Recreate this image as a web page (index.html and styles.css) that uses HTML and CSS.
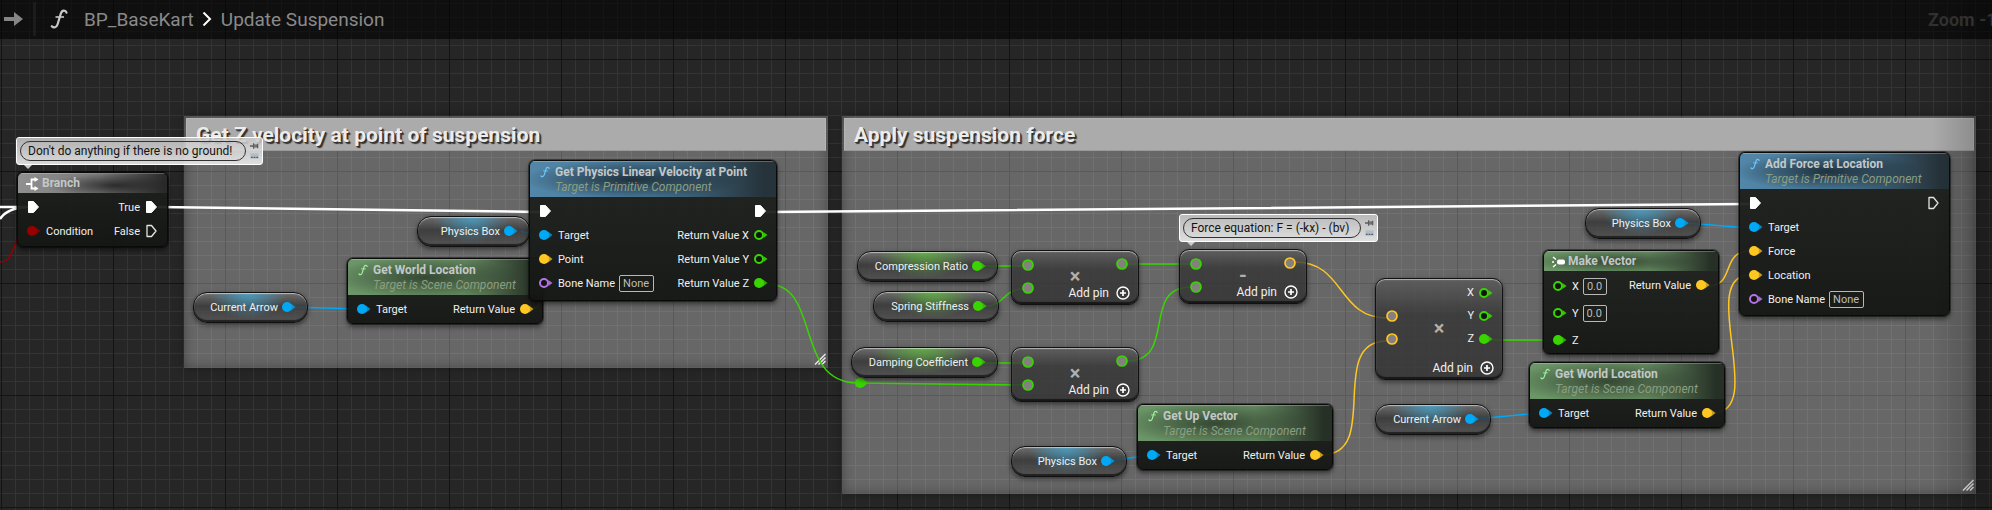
FILE: index.html
```html
<!DOCTYPE html>
<html lang="en">
<head>
<meta charset="utf-8">
<title>BP_BaseKart - Update Suspension</title>
<link rel="stylesheet" href="styles.css">
</head>
<body>
<svg class="defs" aria-hidden="true">
  <symbol id="pin" viewBox="0 0 16 16"><circle cx="6" cy="8" r="5" fill="currentColor"/><path d="M10 4.500L14.500 8L10 11.500Z" fill="currentColor" opacity=".75"/></symbol>
  <symbol id="pin-open" viewBox="0 0 16 16"><circle cx="6" cy="8" r="4" fill="#111411" stroke="currentColor" stroke-width="2"/><path d="M10.500 5L14.500 8L10.500 11Z" fill="currentColor" opacity=".9"/></symbol>
  <symbol id="ring" viewBox="0 0 12 12"><circle cx="6" cy="6" r="5" fill="#848080" stroke="currentColor" stroke-width="1.700"/></symbol>
  <symbol id="exec" viewBox="0 0 16 16"><path d="M2.500 2.500H7.500L12.500 8L7.500 13.500H2.500Z" fill="#fff" stroke="#fff" stroke-linejoin="round"/></symbol>
  <symbol id="exec-open" viewBox="0 0 16 16"><path d="M3 2.500H7.500L12 8L7.500 13.500H3Z" fill="none" stroke="#e4e4e4" stroke-width="1.300" stroke-linejoin="round"/></symbol>
  <symbol id="fn" viewBox="0 0 18 20"><path d="M16.500 3.600C15.500 .8 12 .8 10.800 4.600L7.600 15.200C6.600 18.600 3.600 19.200 1.800 17.200" fill="none" stroke="currentColor" stroke-width="2.200" stroke-linecap="round"/><path d="M5.500 8H14" stroke="currentColor" stroke-width="1.600"/></symbol>
  <symbol id="plus" viewBox="0 0 14 14"><circle cx="7" cy="7" r="6" fill="none" stroke="#fff" stroke-width="1.400"/><path d="M7 4V10M4 7H10" stroke="#fff" stroke-width="1.700"/></symbol>
  <symbol id="grip" viewBox="0 0 12 12"><path d="M1 11.500L11.500 1M4.500 11.500L11.500 4.500M8 11.500L11.500 8" stroke="#e8e8e8" stroke-width="1.500"/></symbol>
  <symbol id="tack" viewBox="0 0 10 8"><path d="M0 4H4M4 1V7M4.500 3H8V5H4.500M8.500 1.500V6.500" fill="none" stroke="#5d5d5d" stroke-width="1.400"/></symbol>
  <symbol id="note" viewBox="0 0 10 8"><rect x=".5" y="1" width="9" height="6" fill="#b4bcc4"/><path d="M1 5.500H3M4 5.500H6M7 5.500H9" stroke="#4f5d70" stroke-width="1.200"/></symbol>
  <symbol id="branch" viewBox="0 0 14 14"><path d="M0 7H5M10 2.500H5.500V11.500H10" fill="none" stroke="#fff" stroke-width="1.800"/><path d="M8.500 0L12.500 2.500L8.500 5ZM8.500 9L12.500 11.500L8.500 14Z" fill="#fff"/></symbol>
  <symbol id="make" viewBox="0 0 14 12"><path d="M1 1L4 3.500M1 11L4 8.500M0 6H2" stroke="#fff" stroke-width="1.500"/><rect x="5" y="3.500" width="8" height="5" rx="2" fill="#fff"/></symbol>
</svg>

<main class="graph">
  <section class="comment comment-velocity"><h2>Get Z velocity at point of suspension</h2><svg class="grip"><use href="#grip"/></svg></section>
  <section class="comment comment-force"><h2>Apply suspension force</h2><svg class="grip"><use href="#grip"/></svg></section>

  <svg class="wires" aria-hidden="true">
    <g class="wire-exec">
      <path d="M0 207H28M0 219Q7 208 28 207"/>
      <path d="M158 207L540 212M766 212L1750 204"/>
    </g>
    <path class="red" d="M0 262C18 262 10 231 30 231"/>
    <g class="green">
      <path d="M767 284C822 284 793 383 858 383L1023 385"/>
      <path d="M983 266H1023M985 306C1005 306 1003 289 1023 289M984 363H1023"/>
      <path d="M1127 264H1191M1127 361C1178 361 1140 287 1191 287"/>
      <path d="M1490 340H1554"/>
    </g>
    <g class="yellow">
      <path d="M1295 262C1345 262 1337 318 1387 318"/>
      <path d="M1322 455C1382 455 1326 341 1387 341"/>
      <path d="M530 309C556 309 520 260 545 260"/>
      <path d="M1708 286C1736 286 1720 251 1750 251"/>
      <path d="M1713 413C1768 413 1696 275 1750 275"/>
    </g>
    <g class="blue">
      <path d="M293 307L357 309M520 231L540 236M1686 223L1750 228M1476 419L1540 413M1112 461L1148 455"/>
    </g>
    <g class="green"><polygon points="863,379 868,383 863,387"/><circle cx="860" cy="383" r="5"/></g>
  </svg>

  <div class="bubble bubble-ground">
    <input type="text" value="Don't do anything if there is no ground!" aria-label="Branch comment">
    <div class="bubble-tools"><button aria-label="Pin comment"><svg><use href="#tack"/></svg></button><button aria-label="Toggle comment"><svg><use href="#note"/></svg></button></div>
  </div>
  <div class="bubble bubble-equation">
    <input type="text" value="Force equation: F = (-kx) - (bv)" aria-label="Subtract comment">
    <div class="bubble-tools"><button aria-label="Pin comment"><svg><use href="#tack"/></svg></button><button aria-label="Toggle comment"><svg><use href="#note"/></svg></button></div>
  </div>

  <article class="node branch">
    <header class="gray slim"><svg class="glyph"><use href="#branch"/></svg><h3>Branch</h3></header>
    <div class="body">
      <div class="col"><div class="row"><svg><use href="#exec"/></svg></div><div class="row red"><svg><use href="#pin"/></svg><span>Condition</span></div></div>
      <div class="col out"><div class="row"><span>True</span><svg><use href="#exec"/></svg></div><div class="row"><span>False</span><svg><use href="#exec-open"/></svg></div></div>
    </div>
  </article>

  <div class="var blue arrow-a"><span>Current Arrow</span><svg><use href="#pin"/></svg></div>
  <div class="var blue box-a"><span>Physics Box</span><svg><use href="#pin"/></svg></div>

  <article class="node world-a">
    <header class="lime"><svg class="glyph"><use href="#fn"/></svg><div><h3>Get World Location</h3><p>Target is Scene Component</p></div></header>
    <div class="body">
      <div class="col"><div class="row blue"><svg><use href="#pin"/></svg><span>Target</span></div></div>
      <div class="col out"><div class="row yellow"><span>Return Value</span><svg><use href="#pin"/></svg></div></div>
    </div>
  </article>

  <article class="node velocity">
    <header class="azure"><svg class="glyph"><use href="#fn"/></svg><div><h3>Get Physics Linear Velocity at Point</h3><p>Target is Primitive Component</p></div></header>
    <div class="body">
      <div class="col">
        <div class="row"><svg><use href="#exec"/></svg></div>
        <div class="row blue"><svg><use href="#pin"/></svg><span>Target</span></div>
        <div class="row yellow"><svg><use href="#pin"/></svg><span>Point</span></div>
        <div class="row purple"><svg><use href="#pin-open"/></svg><label for="bone-a">Bone Name</label><input id="bone-a" class="name" type="text" value="None"></div>
      </div>
      <div class="col out">
        <div class="row"><svg><use href="#exec"/></svg></div>
        <div class="row green"><span>Return Value X</span><svg><use href="#pin-open"/></svg></div>
        <div class="row green"><span>Return Value Y</span><svg><use href="#pin-open"/></svg></div>
        <div class="row green"><span>Return Value Z</span><svg><use href="#pin"/></svg></div>
      </div>
    </div>
  </article>

  <div class="var green ratio"><span>Compression Ratio</span><svg><use href="#pin"/></svg></div>
  <div class="var green stiffness"><span>Spring Stiffness</span><svg><use href="#pin"/></svg></div>
  <div class="var green damping"><span>Damping Coefficient</span><svg><use href="#pin"/></svg></div>

  <div class="math multiply-a">
    <div class="inputs green"><svg><use href="#ring"/></svg><svg><use href="#ring"/></svg></div>
    <span class="op">×</span>
    <div class="result green"><svg><use href="#ring"/></svg></div>
    <button class="add">Add pin<svg><use href="#plus"/></svg></button>
  </div>
  <div class="math multiply-b">
    <div class="inputs green"><svg><use href="#ring"/></svg><svg><use href="#ring"/></svg></div>
    <span class="op">×</span>
    <div class="result green"><svg><use href="#ring"/></svg></div>
    <button class="add">Add pin<svg><use href="#plus"/></svg></button>
  </div>
  <div class="math subtract">
    <div class="inputs green"><svg><use href="#ring"/></svg><svg><use href="#ring"/></svg></div>
    <span class="op">-</span>
    <div class="result yellow"><svg><use href="#ring"/></svg></div>
    <button class="add">Add pin<svg><use href="#plus"/></svg></button>
  </div>
  <div class="math multiply-c">
    <div class="inputs yellow"><svg><use href="#ring"/></svg><svg><use href="#ring"/></svg></div>
    <span class="op">×</span>
    <div class="split green">
      <div class="row"><span>X</span><svg><use href="#pin-open"/></svg></div>
      <div class="row"><span>Y</span><svg><use href="#pin-open"/></svg></div>
      <div class="row"><span>Z</span><svg><use href="#pin"/></svg></div>
    </div>
    <button class="add">Add pin<svg><use href="#plus"/></svg></button>
  </div>

  <div class="var blue box-b"><span>Physics Box</span><svg><use href="#pin"/></svg></div>
  <div class="var blue arrow-b"><span>Current Arrow</span><svg><use href="#pin"/></svg></div>
  <div class="var blue box-c"><span>Physics Box</span><svg><use href="#pin"/></svg></div>

  <article class="node up-vector">
    <header class="lime"><svg class="glyph"><use href="#fn"/></svg><div><h3>Get Up Vector</h3><p>Target is Scene Component</p></div></header>
    <div class="body">
      <div class="col"><div class="row blue"><svg><use href="#pin"/></svg><span>Target</span></div></div>
      <div class="col out"><div class="row yellow"><span>Return Value</span><svg><use href="#pin"/></svg></div></div>
    </div>
  </article>

  <article class="node make-vector">
    <header class="lime slim"><svg class="glyph"><use href="#make"/></svg><h3>Make Vector</h3></header>
    <div class="body">
      <div class="col loose">
        <div class="row green"><svg><use href="#pin-open"/></svg><label for="vec-x">X</label><input id="vec-x" class="number" type="text" value="0.0"></div>
        <div class="row green"><svg><use href="#pin-open"/></svg><label for="vec-y">Y</label><input id="vec-y" class="number" type="text" value="0.0"></div>
        <div class="row green"><svg><use href="#pin"/></svg><span>Z</span></div>
      </div>
      <div class="col out"><div class="row yellow"><span>Return Value</span><svg><use href="#pin"/></svg></div></div>
    </div>
  </article>

  <article class="node world-b">
    <header class="lime"><svg class="glyph"><use href="#fn"/></svg><div><h3>Get World Location</h3><p>Target is Scene Component</p></div></header>
    <div class="body">
      <div class="col"><div class="row blue"><svg><use href="#pin"/></svg><span>Target</span></div></div>
      <div class="col out"><div class="row yellow"><span>Return Value</span><svg><use href="#pin"/></svg></div></div>
    </div>
  </article>

  <article class="node add-force">
    <header class="azure"><svg class="glyph"><use href="#fn"/></svg><div><h3>Add Force at Location</h3><p>Target is Primitive Component</p></div></header>
    <div class="body">
      <div class="col">
        <div class="row"><svg><use href="#exec"/></svg></div>
        <div class="row blue"><svg><use href="#pin"/></svg><span>Target</span></div>
        <div class="row yellow"><svg><use href="#pin"/></svg><span>Force</span></div>
        <div class="row yellow"><svg><use href="#pin"/></svg><span>Location</span></div>
        <div class="row purple"><svg><use href="#pin-open"/></svg><label for="bone-b">Bone Name</label><input id="bone-b" class="name" type="text" value="None"></div>
      </div>
      <div class="col out"><div class="row"><svg><use href="#exec-open"/></svg></div></div>
    </div>
  </article>

  <div class="vignette"></div>

  <nav class="topbar" aria-label="Breadcrumb">
    <button class="forward" aria-label="Forward"><svg viewBox="0 0 20 14"><path d="M0 5H10V0L19 7L10 14V9H0Z" fill="#858585"/></svg></button>
    <span class="divider"></span>
    <svg class="fn"><use href="#fn"/></svg>
    <a href="#">BP_BaseKart</a>
    <svg class="chevron" viewBox="0 0 10 14"><path d="M1.500 0.500L8 7L1.500 13.500" fill="none" stroke="#fff" stroke-width="2"/></svg>
    <a href="#">Update Suspension</a>
    <span class="zoom">Zoom -1</span>
  </nav>
</main>
</body>
</html>
```
FILE: styles.css
```css
* { box-sizing: border-box; }

body {
  margin: 0;
  background: #262626;
  font-family: Roboto, "Liberation Sans", sans-serif;
  font-size: 11px;
  color: #f0f0f0;
}

h2, h3, p { margin: 0; }

button {
  padding: 0;
  border: 0;
  background: none;
  color: inherit;
  font: inherit;
}

.defs { position: absolute; width: 0; height: 0; }

.graph {
  position: relative;
  min-height: 100vh;
  overflow: hidden;
  background-color: #262626;
  background-image:
    linear-gradient(to right, #141414 1px, transparent 1px),
    linear-gradient(to bottom, #141414 1px, transparent 1px),
    linear-gradient(to right, #343434 1px, transparent 1px),
    linear-gradient(to bottom, #343434 1px, transparent 1px);
  background-size: 112px 112px, 112px 112px, 14px 14px, 14px 14px;
  background-position: 1px 0, 0 59px, 1px 0, 0 3px;
}

.blue { color: #00a8f5; }
.yellow { color: #ffc722; }
.green { color: #38d500; }
.purple { color: #b473e6; }
.red { color: #980000; }

/* Top bar */
.topbar {
  position: relative;
  display: flex;
  align-items: center;
  height: 39px;
  padding-bottom: 1px;
  background: rgba(0, 0, 0, 0.6);
  font-size: 19px;
}
.topbar a { color: #8a8a8a; text-decoration: none; }
.forward { margin-left: 4px; width: 20px; height: 14px; display: flex; }
.forward svg { width: 20px; height: 14px; }
.divider { margin-left: 9px; width: 3px; height: 34px; background: #1c1c1c; }
.fn { width: 18px; height: 20px; margin: 0 16px 0 14px; color: #c8c8c8; }
.chevron { width: 10px; height: 14px; margin: 0 9px 0 8px; }
.zoom {
  width: 64px;
  margin-left: auto;
  overflow: hidden;
  white-space: nowrap;
  font-size: 18px;
  font-weight: 700;
  color: #303030;
}

/* Comment boxes */
.comment {
  position: absolute;
  padding: 2px;
  background: rgba(255, 255, 255, 0.3);
  box-shadow: inset 0 0 12px rgba(0, 0, 0, 0.35), 0 0 8px rgba(0, 0, 0, 0.35);
}
.comment h2 {
  height: 33px;
  padding-left: 9px;
  border: 1px solid #b4b4b4;
  border-bottom-color: #999;
  background: #ababab;
  font-size: 21px;
  line-height: 33px;
  color: #ececec;
  text-shadow: 1px 1px 0 #333, 2px 2px 1px #333;
}
.comment-velocity { left: 184px; top: 116px; width: 644px; height: 252px; }
.comment-force { left: 842px; top: 116px; width: 1134px; height: 378px; }
.grip { position: absolute; right: 2px; bottom: 3px; width: 12px; height: 12px; }

/* Wires */
.wires { position: absolute; left: 0; top: 0; width: 100%; height: 100%; }
.wires path { fill: none; stroke: currentColor; stroke-width: 1.5px; }
.wires .wire-exec path { stroke: #fff; stroke-width: 2.5px; }
.wires circle, .wires polygon { fill: currentColor; }

/* Comment bubbles */
.bubble {
  position: absolute;
  display: flex;
  align-items: center;
  gap: 4px;
  height: 28px;
  padding: 0 3px;
  border: 1px solid #fff;
  border-radius: 3px;
  background: linear-gradient(rgba(200, 200, 200, 0.85), rgba(236, 236, 236, 0.9));
}
.bubble::after {
  content: "";
  position: absolute;
  left: 7px;
  top: 27px;
  border: 4px solid transparent;
  border-top-color: #ccc;
  border-bottom: 0;
}
.bubble input {
  flex: 1;
  min-width: 0;
  height: 20px;
  padding: 0 3px 0 7px;
  border: 1px solid #333;
  border-radius: 10px;
  background: none;
  font: 12px Roboto, "Liberation Sans", sans-serif;
  color: #141414;
}
.bubble-tools { display: flex; flex-direction: column; gap: 2px; }
.bubble-tools button, .bubble-tools svg { display: block; width: 9px; height: 8px; }
.bubble-ground { left: 16px; top: 137px; width: 247px; }
.bubble-equation { left: 1179px; top: 214px; width: 199px; }

/* Function nodes */
.node {
  position: absolute;
  border: 1px solid #0a0a0a;
  border-radius: 6px;
  overflow: hidden;
  background: linear-gradient(rgba(30, 33, 30, 0.93), rgba(20, 22, 20, 0.95));
  box-shadow: 0 0 0 1px rgba(0, 0, 0, 0.4), 0 3px 5px rgba(0, 0, 0, 0.5);
}
.node header {
  display: flex;
  align-items: flex-start;
  gap: 5px;
  height: 36px;
  padding: 3px 10px 0;
  border-top: 1px solid rgba(255, 255, 255, 0.25);
}
.node header.slim { height: 20px; padding: 0 8px; align-items: center; gap: 2px; }
.node h3 { font-size: 12px; line-height: 15px; color: #c3c8c8; white-space: nowrap; }
.node p { font-size: 12px; line-height: 15px; font-style: italic; color: #8c9e80; white-space: nowrap; }
.glyph { flex: none; width: 10px; height: 14px; }
.slim .glyph { width: 14px; height: 14px; }
.azure {
  color: #72c4f5;
  background:
    radial-gradient(ellipse 45% 55% at 42% 50%, rgba(22, 32, 40, 0.8), transparent),
    linear-gradient(to right, #5287a9, #467593 50%, #26333a 95%);
}
.lime {
  color: #9df09d;
  background:
    radial-gradient(ellipse 50% 60% at 40% 50%, rgba(32, 42, 30, 0.7), transparent),
    linear-gradient(to right, #6c9668, #668c62 60%, #263026 96%);
}
.gray {
  background:
    radial-gradient(ellipse 45% 60% at 65% 60%, rgba(30, 30, 30, 0.8), transparent),
    linear-gradient(to right, #909090, #777 55%, #2b2b2b 98%);
}

.body { display: flex; justify-content: space-between; padding: 2px 7px 4px 8px; }
.row {
  display: flex;
  align-items: center;
  gap: 4px;
  height: 24px;
  white-space: nowrap;
}
.row svg { flex: none; width: 16px; height: 16px; }
.row span, .row label, .var span { color: #f0f0f0; }
.col.out .row { justify-content: flex-end; }
.row input {
  height: 17px;
  padding: 0 3px;
  border: 1px solid #b8b8b8;
  border-radius: 2px;
  background: none;
  font: 11px Roboto, "Liberation Sans", sans-serif;
  color: #bdbdbd;
}
.name { width: 35px; }
.number { width: 24px; }
.loose { display: flex; flex-direction: column; gap: 3px; padding-top: 1px; }

.branch { left: 17px; top: 172px; width: 151px; height: 75px; }
.world-a { left: 347px; top: 258px; width: 196px; height: 66px; }
.velocity { left: 529px; top: 160px; width: 248px; height: 141px; }
.up-vector { left: 1137px; top: 404px; width: 196px; height: 66px; }
.make-vector { left: 1543px; top: 250px; width: 176px; height: 104px; }
.world-b { left: 1529px; top: 362px; width: 196px; height: 66px; }
.add-force { left: 1739px; top: 152px; width: 211px; height: 164px; }

/* Variable nodes */
.var, .math {
  position: absolute;
  border: 1px solid #111;
  box-shadow:
    inset 0 1px 1px rgba(255, 255, 255, 0.55),
    inset 0 -2px 1px rgba(0, 0, 0, 0.6),
    0 2px 5px rgba(0, 0, 0, 0.5);
}
.var {
  display: flex;
  align-items: center;
  justify-content: flex-end;
  gap: 3px;
  height: 31px;
  padding-right: 10px;
  padding-bottom: 1px;
  border-radius: 14px;
  white-space: nowrap;
}
.var svg { width: 16px; height: 16px; }
.var.blue {
  background:
    radial-gradient(ellipse 34% 90% at 48% 0, rgba(66, 170, 215, 0.75), transparent),
    linear-gradient(rgba(110, 110, 110, 0.7), rgba(48, 48, 48, 0.75) 45%, rgba(75, 75, 75, 0.7));
}
.var.green {
  background:
    radial-gradient(ellipse 34% 90% at 48% 0, rgba(95, 190, 60, 0.75), transparent),
    linear-gradient(rgba(110, 110, 110, 0.7), rgba(48, 48, 48, 0.75) 45%, rgba(75, 75, 75, 0.7));
}
.arrow-a { left: 193px; top: 292px; width: 115px; }
.box-a { left: 417px; top: 216px; width: 113px; }
.ratio { left: 857px; top: 251px; width: 141px; }
.stiffness { left: 873px; top: 291px; width: 126px; }
.damping { left: 851px; top: 347px; width: 147px; }
.box-b { left: 1585px; top: 208px; width: 116px; }
.arrow-b { left: 1375px; top: 404px; width: 116px; }
.box-c { left: 1011px; top: 446px; width: 116px; }

/* Compact math nodes */
.math {
  display: grid;
  grid-template-columns: auto 1fr auto;
  grid-template-rows: 1fr auto;
  width: 128px;
  height: 55px;
  padding-bottom: 3px;
  border-radius: 10px;
  background: linear-gradient(rgba(92, 92, 92, 0.85), rgba(52, 52, 52, 0.8) 35%, rgba(48, 48, 48, 0.8));
}
.math svg { display: block; width: 12px; height: 12px; }
.inputs {
  grid-area: 1 / 1 / 3 / 2;
  display: flex;
  flex-direction: column;
  justify-content: center;
  gap: 11px;
  padding-left: 10px;
}
.op {
  grid-area: 1 / 1 / 3 / 4;
  place-self: center;
  font-size: 20px;
  font-weight: 700;
  line-height: 20px;
  color: #b0b0b0;
}
.result { grid-area: 1 / 3 / 2 / 4; padding: 7px 10px 0 0; }
.split { grid-area: 1 / 3 / 2 / 4; padding: 2px 8px 0 0; }
.split .row { height: 23px; justify-content: flex-end; }
.split .row svg { width: 16px; height: 16px; }
.add {
  grid-area: 2 / 2 / 3 / 4;
  justify-self: end;
  display: flex;
  align-items: center;
  gap: 7px;
  height: 16px;
  padding-right: 8px;
  font-size: 12px;
}
.math .add svg { width: 14px; height: 14px; }
.multiply-a { left: 1011px; top: 250px; }
.multiply-b { left: 1011px; top: 347px; }
.subtract { left: 1179px; top: 249px; }
.multiply-c { left: 1375px; top: 278px; height: 102px; }

.vignette {
  position: absolute;
  inset: 0;
  pointer-events: none;
  background: linear-gradient(to left, rgba(0, 0, 0, 0.25), transparent 60px);
}
```
